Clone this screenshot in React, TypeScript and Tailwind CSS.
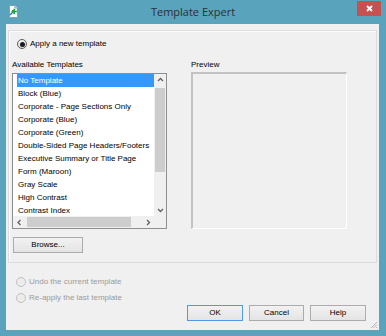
import React from 'react';

const templates = [
    'No Template',
    'Block (Blue)',
    'Corporate - Page Sections Only',
    'Corporate (Blue)',
    'Corporate (Green)',
    'Double-Sided Page Headers/Footers',
    'Executive Summary or Title Page',
    'Form (Maroon)',
    'Gray Scale',
    'High Contrast',
    'Contrast Index',
];

function Chevron({ dir }: { dir: 'up' | 'down' | 'left' | 'right' }) {
    const pts = {
        up: '1,4 3.5,1.5 6,4',
        down: '1,2 3.5,4.5 6,2',
        left: '4.5,1 2,3.5 4.5,6',
        right: '2,1 4.5,3.5 2,6',
    }[dir];
    return (
        <svg width="7" height="7" viewBox="0 0 7 7">
            <polyline points={pts} fill="none" stroke="#606060" strokeWidth="1.3" />
        </svg>
    );
}

function Radio({ checked, disabled }: { checked?: boolean; disabled?: boolean }) {
    return (
        <span
            className={
                disabled
                    ? 'w-[10px] h-[10px] rounded-full border border-[#c2c2c2] bg-[#ececec] shrink-0'
                    : 'w-[10px] h-[10px] rounded-full border border-[#5c5c5c] bg-gradient-to-b from-[#f4f4f4] to-[#dedede] flex items-center justify-center shrink-0'
            }
        >
            {checked && <span className="w-[5px] h-[5px] rounded-full bg-[#1a1a1a]" />}
        </span>
    );
}

function Button({ label, primary, className }: { label: string; primary?: boolean; className?: string }) {
    return (
        <button
            className={`h-[16px] flex items-center justify-center border bg-gradient-to-b from-[#f2f2f2] to-[#e4e4e4] text-[8px] text-black leading-none ${
                primary ? 'border-[#4d9be6]' : 'border-[#acacac]'
            } ${className ?? ''}`}
        >
            {label}
        </button>
    );
}

export default function App() {
    return (
        <div className="w-[386px] h-[336px] bg-[#5aa3bc] flex flex-col font-['Liberation_Sans',Arial,sans-serif] select-none">
            {/* Title bar */}
            <div className="h-[24px] grid grid-cols-[1fr_auto_1fr]">
                <div className="pl-[8px] pt-[5px]">
                    <svg width="11" height="13" viewBox="0 0 11 13">
                        <path d="M1.5 0.5 H7 L9.5 3 V12.5 H1.5 Z" fill="#ffffff" stroke="#7b9fc4" />
                        <path d="M7 0.5 V3 H9.5" fill="#dfe9f3" stroke="#7b9fc4" />
                        <path d="M2 10 L5 7" stroke="#3b6fd0" strokeWidth="1.4" />
                        <path d="M4 5 H7 V8 H6 V6 H4 Z" fill="#1fae3a" />
                        <path d="M6.2 3.8 V9.2 M3.5 6.5 H8.9" stroke="#19a834" strokeWidth="1.6" />
                    </svg>
                </div>
                <div className="pt-[4px] text-[11px] leading-[16px] text-[#2f2f2f] font-['Open_Sans','Noto_Sans',sans-serif]">
                    Template Expert
                </div>
                <div className="flex justify-end pr-[5px] pt-[1px]">
                    <div className="w-[24px] h-[15px] bg-[#c75050] flex items-center justify-center">
                        <svg width="7" height="7" viewBox="0 0 7 7">
                            <path d="M1 1 L6 6 M6 1 L1 6" stroke="#ffffff" strokeWidth="1.8" />
                        </svg>
                    </div>
                </div>
            </div>

            {/* Client area */}
            <div className="ml-[6px] mr-[7px] mb-[6px] flex-1 bg-[#f0f0f0] flex flex-col text-[8px] leading-[10px] text-black relative">
                <div className="mt-[6px] mx-[2px] h-[233px] border border-[#dcdcdc] shadow-[inset_1px_1px_0_#fbfbfb] flex flex-col">
                    <div className="mt-[8px] pl-[8px] flex items-center gap-[3px] h-[10px]">
                        <Radio checked />
                        <span>Apply a new template</span>
                    </div>

                    <div className="mt-[11px] pl-[3px] flex items-start gap-[24px]">
                        <div className="flex flex-col w-[155px]">
                            <span className="h-[10px]">Available Templates</span>
                            <div className="mt-[3px] h-[156px] border border-[#8e8f8f] bg-white flex flex-col">
                                <div className="flex h-[142px]">
                                    <div className="flex-1 overflow-hidden flex flex-col">
                                        {templates.map((t, i) => (
                                            <div
                                                key={t}
                                                className={`ml-[4px] h-[13px] shrink-0 pl-[1px] flex items-center whitespace-nowrap ${
                                                    i === 0 ? 'bg-[#3399ff] text-white' : ''
                                                }`}
                                            >
                                                {t}
                                            </div>
                                        ))}
                                    </div>
                                    {/* vertical scrollbar */}
                                    <div className="w-[12px] bg-[#f0f0f0] flex flex-col items-center">
                                        <div className="h-[13px] flex items-center justify-center">
                                            <Chevron dir="up" />
                                        </div>
                                        <div className="mt-[1px] w-[10px] h-[84px] bg-[#cdcdcd]" />
                                        <div className="flex-1" />
                                        <div className="h-[12px] flex items-center justify-center">
                                            <Chevron dir="down" />
                                        </div>
                                    </div>
                                </div>
                                {/* horizontal scrollbar */}
                                <div className="flex h-[12px]">
                                    <div className="flex-1 bg-[#f0f0f0] flex items-center">
                                        <div className="w-[12px] flex items-center justify-center">
                                            <Chevron dir="left" />
                                        </div>
                                        <div className="ml-[2px] w-[104px] h-[10px] bg-[#cdcdcd]" />
                                        <div className="flex-1" />
                                        <div className="w-[12px] flex items-center justify-center">
                                            <Chevron dir="right" />
                                        </div>
                                    </div>
                                    <div className="w-[12px] bg-[#f0f0f0]" />
                                </div>
                            </div>
                            <Button label="Browse..." className="mt-[8px] ml-[1px] w-[70px]" />
                        </div>

                        <div className="flex flex-col">
                            <span className="h-[10px]">Preview</span>
                            <div className="mt-[2px] w-[156px] h-[157px] border-t-2 border-l-2 border-t-[#c3c3c3] border-l-[#c3c3c3] border-r border-b border-r-white border-b-white" />
                        </div>
                    </div>
                </div>

                <div className="mt-[13px] pl-[10px] flex items-center gap-[3px] h-[12px] text-[#9a9a9a]">
                    <Radio disabled />
                    <span>Undo the current template</span>
                </div>
                <div className="mt-[4px] pl-[10px] flex items-center gap-[3px] h-[12px] text-[#9a9a9a]">
                    <Radio disabled />
                    <span>Re-apply the last template</span>
                </div>

                <div className="mt-[1px] pr-[13px] flex justify-end gap-[6px]">
                    <Button label="OK" primary className="w-[56px]" />
                    <Button label="Cancel" className="w-[55px]" />
                    <Button label="Help" className="w-[56px]" />
                </div>

                {/* size grip */}
                <div className="mt-auto mb-[1px] mr-[1px] self-end">
                    <svg width="8" height="8" viewBox="0 0 8 8">
                        <path d="M7 1 L1 7 M7 3.5 L3.5 7 M7 6 L6 7" stroke="#b5b5b5" strokeWidth="1" />
                    </svg>
                </div>
            </div>
        </div>
    );
}
